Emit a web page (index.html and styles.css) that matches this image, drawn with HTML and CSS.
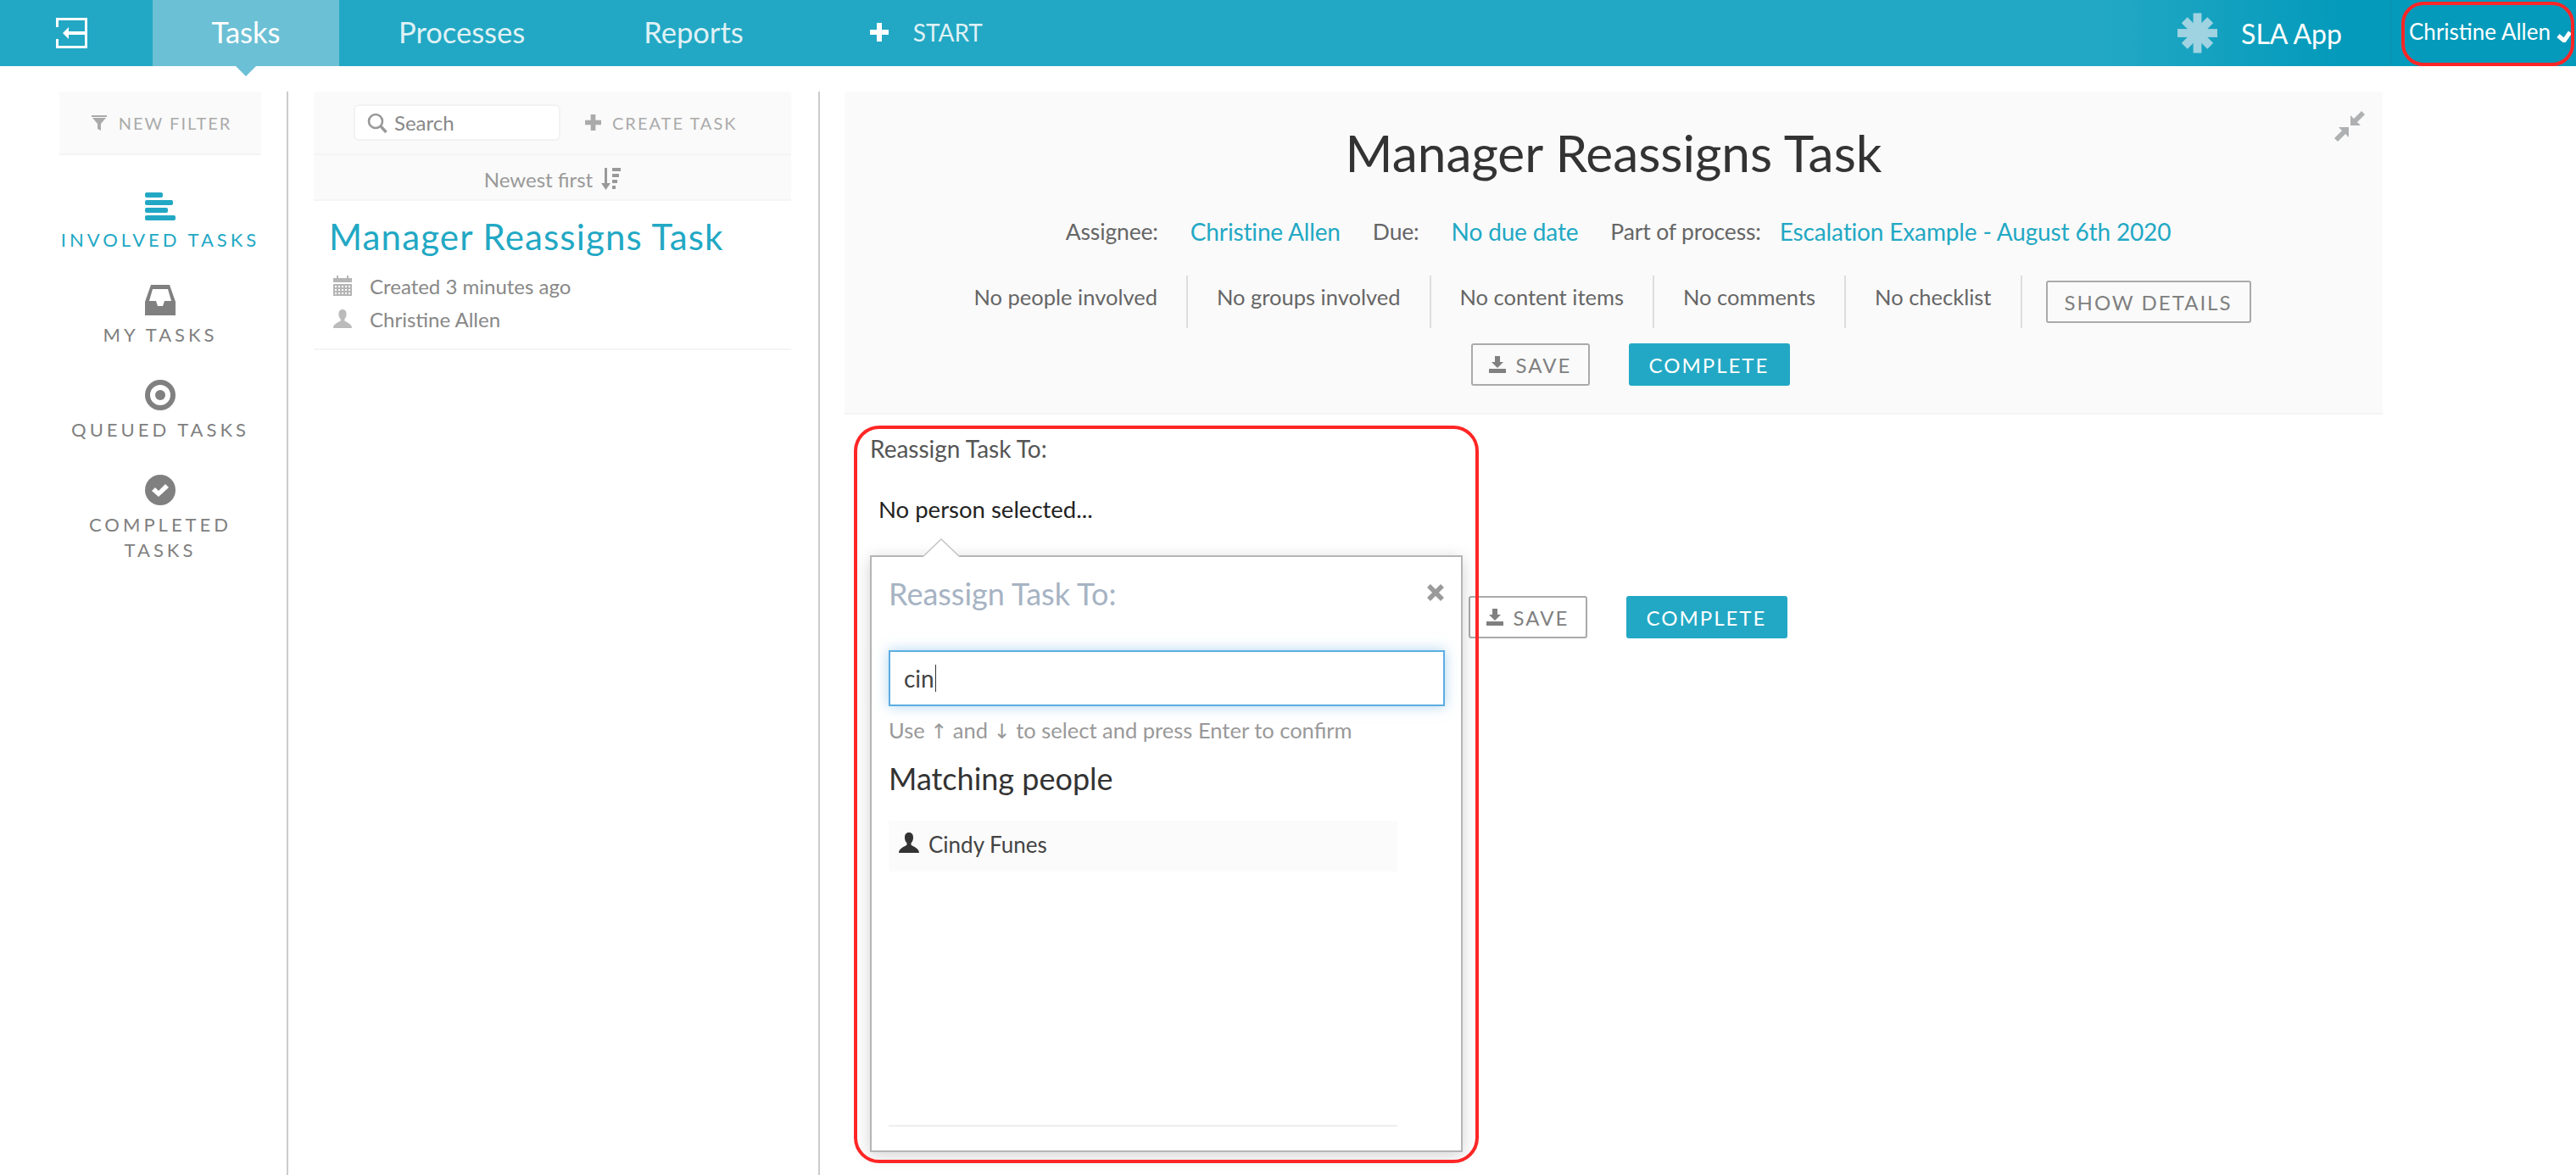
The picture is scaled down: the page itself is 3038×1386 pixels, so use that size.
FILE: index.html
```html
<!DOCTYPE html>
<html lang="en">
<head>
<meta charset="utf-8">
<title>Manager Reassigns Task</title>
<link rel="stylesheet" href="styles.css">
</head>
<body>
<header class="topbar">
  <a class="back"><svg class="back-icon" viewBox="0 0 37 36"><path d="M1.500 11V1.500h34v33h-34V25" fill="none" stroke="#fff" stroke-width="3"/><path d="M8 18l7-7v5h20v4H15v5z" fill="#fff"/></svg></a>
  <a class="tab tab-active">Tasks</a>
  <a class="tab">Processes</a>
  <a class="tab">Reports</a>
  <a class="start"><svg class="start-icon" viewBox="0 0 22 22"><path d="M8 0h6v8h8v6h-8v8H8v-8H0V8h8z" fill="#fff"/></svg><span>START</span></a>
  <div class="brand">
    <svg class="brand-icon" viewBox="0 0 48 48" fill="#9fd3e1"><rect x="19" y="0" width="10" height="48"/><rect y="19" x="0" width="48" height="10"/><rect x="19" y="2" width="10" height="44" transform="rotate(45 24 24)"/><rect x="19" y="2" width="10" height="44" transform="rotate(-45 24 24)"/></svg>
    <span>SLA App</span>
  </div>
  <div class="user"><span>Christine Allen</span><svg class="user-chev" viewBox="0 0 18 14"><path d="M2 6l7 6 7-10" fill="none" stroke="#fff" stroke-width="5"/></svg></div>
  <div class="note note-user"></div>
</header>

<main class="app">
  <aside class="sidebar">
    <div class="new-filter"><svg class="filter-icon" viewBox="0 0 18 18"><path d="M0 0h18v2H0zM1 3h16l-6 7v8l-4-2v-6z" fill="#aaa"/></svg><span>NEW FILTER</span></div>
    <nav class="filters">
      <a class="filter filter-on">
        <svg class="filter-svg filter-svg-short" viewBox="0 0 36 33" fill="#22a8c4"><rect width="21" height="6" rx="2"/><rect y="9" width="33" height="6" rx="2"/><rect y="18" width="27" height="6" rx="2"/><rect y="27" width="36" height="6" rx="2"/></svg>
        <span>INVOLVED TASKS</span>
      </a>
      <a class="filter">
        <svg class="filter-svg" viewBox="0 0 36 36"><path d="M7 0h22l7 20v16H0V20z" fill="#808080"/><path d="M9 5h18l4 14h-8l-2 6h-6l-2-6H5z" fill="#fff"/></svg>
        <span>MY TASKS</span>
      </a>
      <a class="filter">
        <svg class="filter-svg" viewBox="0 0 36 36"><circle cx="18" cy="18" r="15" fill="none" stroke="#808080" stroke-width="6"/><circle cx="18" cy="18" r="6" fill="#808080"/></svg>
        <span>QUEUED TASKS</span>
      </a>
      <a class="filter">
        <svg class="filter-svg" viewBox="0 0 36 36"><circle cx="18" cy="18" r="18" fill="#808080"/><path d="M8 19l4-4 4 4 8-8 4 4-12 11z" fill="#fff"/></svg>
        <span>COMPLETED TASKS</span>
      </a>
    </nav>
  </aside>

  <section class="list">
    <div class="list-head">
      <div class="search"><svg class="search-icon" viewBox="0 0 24 24"><circle cx="10" cy="10" r="8" fill="none" stroke="#999" stroke-width="2.6"/><path d="M15.5 15.5l7 7.5" stroke="#999" stroke-width="3.4"/></svg><span>Search</span></div>
      <a class="create"><svg class="create-icon" viewBox="0 0 20 20"><path d="M7 0h6v7h7v6h-7v7H7v-7H0V7h7z" fill="#aaa"/></svg><span>CREATE TASK</span></a>
    </div>
    <div class="sort"><span>Newest first</span><svg class="sort-icon" viewBox="0 0 24 26" fill="#999"><path d="M5 0h3v18h4l-5.500 8L1 18h4z"/><rect x="14" width="10" height="4"/><rect x="14" y="7" width="8" height="4"/><rect x="14" y="14" width="6" height="4"/><rect x="14" y="21" width="4" height="4"/></svg></div>
    <article class="task">
      <h2 class="task-title">Manager Reassigns Task</h2>
      <div class="task-line"><svg class="task-icon" viewBox="0 0 22 24" fill="#b5b5b5"><path d="M0 3h4V0h2v3h10V0h2v3h4v5H0z"/><path d="M0 10h22v14H0zm2 2v2h2v-2zm4 0v2h2v-2zm4 0v2h2v-2zm4 0v2h2v-2zm4 0v2h2v-2zM2 16v2h2v-2zm4 0v2h2v-2zm4 0v2h2v-2zm4 0v2h2v-2zm4 0v2h2v-2zM2 20v2h2v-2zm4 0v2h2v-2zm4 0v2h2v-2zm4 0v2h2v-2zm4 0v2h2v-2z" fill-rule="evenodd"/></svg><span>Created 3 minutes ago</span></div>
      <div class="task-line"><svg class="task-icon" viewBox="0 0 24 24" fill="#bbb"><path d="M12 0c3.500 0 5 2.500 5 6 0 3-1 5-2.500 6.500v2C16 16.500 24 18 24 24H0c0-6 8-7.500 9.500-9.500v-2C8 11 7 9 7 6c0-3.500 1.500-6 5-6z"/></svg><span>Christine Allen</span></div>
    </article>
  </section>

  <section class="detail">
    <div class="panel">
      <svg class="collapse" viewBox="0 0 36 36" fill="#aeb0b1"><path d="M19 5v12h12l-4-4 9-9-4-4-9 9zM17 31V19H5l4 4-9 9 4 4 9-9z"/></svg>
      <h1 class="detail-title">Manager Reassigns Task</h1>
      <div class="meta">
        <span class="meta-label">Assignee:</span><a class="meta-link">Christine Allen</a>
        <span class="meta-label">Due:</span><a class="meta-link">No due date</a>
        <span class="meta-label meta-label-tight">Part of process:</span><a class="meta-link">Escalation Example - August 6th 2020</a>
      </div>
      <div class="stats">
        <div class="stat">No people involved</div>
        <div class="stat">No groups involved</div>
        <div class="stat">No content items</div>
        <div class="stat">No comments</div>
        <div class="stat">No checklist</div>
        <button class="btn btn-outline btn-details">SHOW DETAILS</button>
      </div>
      <div class="actions">
        <button class="btn btn-outline btn-save"><svg class="save-icon" viewBox="0 0 20 20" fill="#808080"><path d="M7 0h6v7h4l-7 7-7-7h4zM0 15h20v5H0z"/></svg>SAVE</button>
        <button class="btn btn-primary">COMPLETE</button>
      </div>
    </div>

    <form class="form">
      <label class="field-label">Reassign Task To:</label>
      <div class="selected">No person selected...</div>
      <div class="actions actions-form">
        <button class="btn btn-outline btn-save" type="button"><svg class="save-icon" viewBox="0 0 20 20" fill="#808080"><path d="M7 0h6v7h4l-7 7-7-7h4zM0 15h20v5H0z"/></svg>SAVE</button>
        <button class="btn btn-primary" type="button">COMPLETE</button>
      </div>
      <div class="popover">
        <svg class="pop-arrow" viewBox="0 0 44 22"><path d="M0 22L22 1l22 21" fill="#fff" stroke="#c4c4c4" stroke-width="1.500"/></svg>
        <div class="pop-head">
          <h3 class="pop-title">Reassign Task To:</h3>
          <svg class="pop-close" viewBox="0 0 20 20"><path d="M2 2l16 16M18 2L2 18" stroke="#9a9a9a" stroke-width="5.500"/></svg>
        </div>
        <div class="pop-input"><span>cin</span><i class="caret"></i></div>
        <p class="pop-hint">Use <span class="arrow">↑</span> and <span class="arrow">↓</span> to select and press Enter to confirm</p>
        <h4 class="pop-sub">Matching people</h4>
        <div class="person"><svg class="person-icon" viewBox="0 0 24 24" fill="#333"><path d="M12 0c3.500 0 5 2.500 5 6 0 3-1 5-2.500 6.500v2C16 16.500 24 18 24 24H0c0-6 8-7.500 9.500-9.500v-2C8 11 7 9 7 6c0-3.500 1.500-6 5-6z"/></svg><span>Cindy Funes</span></div>
        <div class="pop-rule"></div>
      </div>
      <div class="note note-form"></div>
    </form>
  </section>
</main>
</body>
</html>
```
FILE: styles.css
```css
* { box-sizing: border-box; }
html, body { margin: 0; height: 100%; }
body {
  font-family: Lato, "Liberation Sans", sans-serif;
  color: #555;
  background: #fff;
  overflow: hidden;
}
h1, h2, h3, h4, p { margin: 0; font-weight: 400; }

/* top bar */
.topbar {
  position: relative;
  display: flex;
  align-items: center;
  height: 78px;
  background: linear-gradient(90deg, #22a8c4 0, #22a8c4 2480px, #049abb 2760px, #049abb 100%);
  color: #fff;
}
.back { display: flex; align-items: center; justify-content: center; width: 180px; height: 100%; padding-right: 12px; }
.back-icon { width: 37px; height: 36px; }
.tab {
  position: relative;
  display: flex;
  align-items: center;
  height: 100%;
  padding: 0 70px 3px;
  font-size: 34.5px;
  color: #dff1f5;
}
.tab-active { width: 220px; justify-content: center; padding: 0 0 3px; background: #6cc0d5; color: #fff; }
.tab-active::after {
  content: "";
  position: absolute;
  left: 50%;
  top: 78px;
  margin-left: -12px;
  border-left: 12px solid transparent;
  border-right: 12px solid transparent;
  border-top: 12px solid #6cc0d5;
}
.start { display: flex; align-items: center; gap: 29px; margin-left: 79px; padding-bottom: 2px; font-size: 28px; color: #dff1f5; }
.start-icon { width: 22px; height: 22px; }
.brand { display: flex; align-items: center; gap: 28px; margin-left: auto; font-size: 32px; }
.brand-icon { width: 47px; height: 48px; }
.user {
  display: flex;
  align-items: center;
  gap: 7px;
  width: 219px;
  height: 100%;
  margin-left: 57px;
  padding: 0 0 4px 21px;
  border-left: 1px solid #0f8fab;
  font-size: 26px;
}
.user-chev { width: 18px; height: 14px; margin-top: 12px; }
.note { position: absolute; border: 4px solid #ff2626; pointer-events: none; }
.note-user { left: 2832px; top: 2px; width: 204px; height: 76px; border-radius: 26px; }

/* layout */
.app { display: flex; height: calc(100vh - 78px); padding: 30px 0 0 70px; overflow: hidden; }

/* sidebar */
.sidebar { flex: none; width: 270px; padding-right: 30px; border-right: 2px solid #ccc; }
.new-filter {
  display: flex;
  align-items: center;
  justify-content: center;
  gap: 14px;
  width: 238px;
  height: 75px;
  padding-left: 3px;
  background: #fafafa;
  border-bottom: 2px solid #f4f4f4;
  font-size: 20px;
  letter-spacing: 2px;
  color: #aaa;
}
.filter-icon { width: 18px; height: 18px; }
.filters { display: flex; flex-direction: column; gap: 38px; padding-top: 44px; width: 238px; }
.filter {
  display: flex;
  flex-direction: column;
  align-items: center;
  gap: 8px;
  font-size: 22px;
  line-height: 30px;
  letter-spacing: 4px;
  text-align: center;
  color: #808080;
}
.filter-on { color: #22a8c4; }
.filter-svg { width: 36px; height: 36px; }
.filter-svg-short { height: 33px; }

/* list */
.list { flex: none; width: 597px; margin-left: 30px; padding-right: 32px; border-right: 2px solid #ccc; }
.list-head {
  display: flex;
  align-items: center;
  gap: 29px;
  height: 75px;
  padding-left: 47px;
  background: #fafafa;
  border-bottom: 2px solid #f4f4f4;
}
.search {
  display: flex;
  align-items: center;
  gap: 8px;
  width: 244px;
  height: 43px;
  padding-left: 14px;
  background: #fff;
  border: 2px solid #f2f2f2;
  border-radius: 6px;
  font-size: 24px;
  color: #888;
}
.search-icon { width: 24px; height: 24px; }
.create { display: flex; align-items: center; gap: 13px; font-size: 20px; letter-spacing: 2px; color: #aaa; }
.create-icon { width: 19px; height: 19px; }
.sort {
  display: flex;
  align-items: center;
  justify-content: center;
  gap: 9px;
  height: 54px;
  padding-top: 4px;
  background: #fafafa;
  border-bottom: 2px solid #f4f4f4;
  font-size: 24px;
  color: #999;
}
.sort-icon { width: 24px; height: 26px; }
.task { height: 176px; padding: 14px 0 0 18px; border-bottom: 2px solid #f4f4f4; }
.task-title { margin-bottom: 10px; font-size: 42px; line-height: 56px; letter-spacing: 1.15px; color: #22a8c4; }
.task-line { display: flex; align-items: center; gap: 21px; height: 40px; padding-left: 5px; font-size: 24px; color: #888; }
.task-line + .task-line { margin-top: -1px; }
.task-icon { width: 22px; height: 24px; }

/* detail */
.detail { position: relative; flex: none; width: 1814px; margin-left: 29px; }
.panel {
  position: relative;
  height: 381px;
  padding-top: 36px;
  background: #fafafa;
  border-bottom: 2px solid #f4f4f4;
  text-align: center;
}
.collapse { position: absolute; top: 23px; right: 21px; width: 36px; height: 36px; }
.detail-title { font-size: 60.4px; line-height: 72px; color: #333; }
.meta { display: flex; justify-content: center; align-items: center; height: 40px; margin-top: 37px; padding-left: 11px; font-size: 28px; letter-spacing: -.15px; }
.meta-label { margin-right: 38px; font-size: 26.5px; color: #666; }
.meta-label-tight { margin-right: 22px; }
.meta-link { margin-right: 38px; color: #22a8c4; }
.meta-link:last-child { margin-right: 0; }
.stats { display: flex; justify-content: center; height: 62px; margin-top: 32px; padding-right: 37px; }
.stat { padding: 10px 34px 0; border-right: 2px solid #ddd; font-size: 25.5px; color: #666; }
.btn {
  display: inline-flex;
  align-items: center;
  justify-content: center;
  height: 50px;
  border-radius: 3px;
  font-family: inherit;
  font-size: 24px;
  letter-spacing: 2px;
}
.btn-outline { background: transparent; border: 2px solid #aaa; color: #808080; }
.btn-primary { width: 190px; background: #22a8c4; border: 0; color: #fff; }
.btn-details { width: 242px; margin: 6px 0 0 28px; }
.btn-save { width: 140px; gap: 12px; }
.save-icon { width: 20px; height: 20px; }
.actions { display: flex; justify-content: center; gap: 46px; margin-top: 18px; padding-left: 39px; }

/* form */
.form { position: relative; height: 880px; }
.field-label { display: block; padding: 24px 0 0 30px; font-size: 28px; line-height: 32px; color: #555; }
.selected { padding: 38px 0 0 40px; font-size: 27.5px; line-height: 36px; color: #222; }
.actions-form { margin-top: 84px; padding-left: 33px; }
.popover {
  position: absolute;
  left: 30px;
  top: 166px;
  width: 699px;
  height: 704px;
  padding: 0 20px 0 20px;
  background: #fff;
  border: 2px solid #b5b5b5;
  box-shadow: 0 4px 18px rgba(0, 0, 0, .18);
}
.pop-arrow { position: absolute; left: 60px; top: -22px; width: 44px; height: 22px; }
.pop-head { display: flex; justify-content: space-between; height: 110px; padding-top: 20px; }
.pop-title { font-size: 36px; line-height: 46px; color: #a6b3c3; }
.pop-close { width: 20px; height: 20px; margin-top: 12px; }
.pop-input {
  display: flex;
  align-items: center;
  width: 656px;
  height: 66px;
  padding-left: 16px;
  border: 2px solid #5dade2;
  box-shadow: 0 0 14px rgba(93, 173, 226, .5);
  font-size: 28px;
  color: #444;
}
.caret { width: 1.500px; height: 32px; margin-left: 1px; background: #333; }
.pop-hint { height: 32px; margin-top: 12px; font-size: 25.5px; line-height: 32px; color: #999; }
.arrow { font-family: "DejaVu Sans", sans-serif; font-size: 24px; line-height: 1; }
.pop-sub { margin-top: 18px; font-size: 36px; line-height: 46px; color: #333; }
.person {
  display: flex;
  align-items: center;
  gap: 11px;
  width: 600px;
  height: 60px;
  margin-top: 27px;
  padding: 0 0 4px 12px;
  background: #fbfbfb;
  font-size: 26px;
  color: #444;
}
.person-icon { width: 24px; height: 24px; margin-top: -4px; }
.pop-rule { width: 600px; height: 2px; margin-top: 299px; background: #eee; }
.note-form { left: 11px; top: 13px; width: 737px; height: 870px; border-radius: 30px; }
```
